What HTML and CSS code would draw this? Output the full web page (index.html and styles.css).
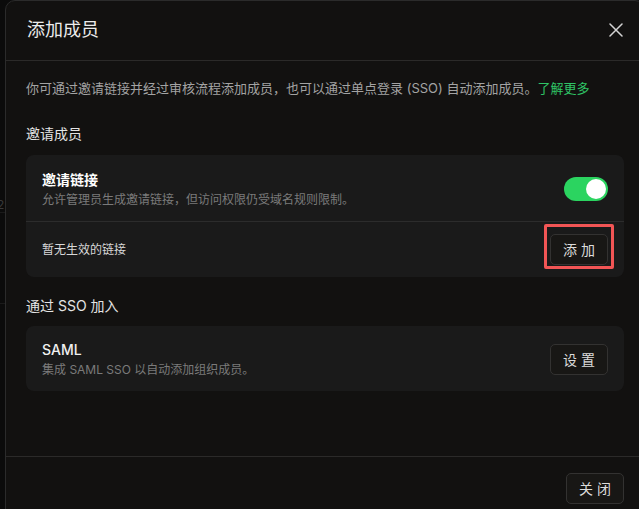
FILE: index.html
```html
<!DOCTYPE html>
<html lang="zh-CN">
<head>
<meta charset="utf-8">
<link rel="stylesheet" href="styles.css">
</head>
<body>
<div class="backdrop">
  <span class="bg-digit">2</span>
  <div class="bg-line bg-line-1"></div>
  <div class="bg-line bg-line-2"></div>
</div>
<div class="dialog">
  <header class="dialog-header">
    <h1 class="dialog-title">添加成员</h1>
    <button class="close-btn" aria-label="关闭">
      <svg width="14" height="14" viewBox="0 0 14 14"><path d="M1 1L13 13M13 1L1 13" stroke="#d4d4d4" stroke-width="1.5" stroke-linecap="round"/></svg>
    </button>
  </header>
  <div class="dialog-body">
    <p class="desc">你可通过邀请链接并经过审核流程添加成员，也可以通过单点登录 (SSO) 自动添加成员。<a class="link">了解更多</a></p>

    <h2 class="section-label">邀请成员</h2>
    <div class="card">
      <div class="row row-top">
        <div class="row-text">
          <div class="row-title bold">邀请链接</div>
          <div class="row-sub">允许管理员生成邀请链接，但访问权限仍受域名规则限制。</div>
        </div>
        <div class="toggle"><div class="knob"></div></div>
      </div>
      <div class="row row-bottom">
        <div class="row-plain">暂无生效的链接</div>
        <div class="highlight-wrap">
          <button class="btn">添 加</button>
          <div class="highlight"></div>
        </div>
      </div>
    </div>

    <h2 class="section-label section-label-2">通过 SSO 加入</h2>
    <div class="card">
      <div class="row row-saml">
        <div class="row-text">
          <div class="row-title">SAML</div>
          <div class="row-sub">集成 SAML SSO 以自动添加组织成员。</div>
        </div>
        <button class="btn">设 置</button>
      </div>
    </div>
  </div>
  <footer class="dialog-footer">
    <button class="btn">关 闭</button>
  </footer>
</div>
</body>
</html>
```

FILE: styles.css
```css
* { box-sizing: border-box; margin: 0; padding: 0; }
html, body {
  width: 639px;
  height: 509px;
  overflow: hidden;
  background: #0b0b0b;
  font-family: "Inter", "Noto Sans CJK SC", sans-serif;
  color: #e6e6e6;
}
body { position: relative; }

.backdrop { position: absolute; inset: 0; }
.bg-digit {
  position: absolute;
  left: -3px;
  top: 197px;
  font-size: 12px;
  color: #3a3a3a;
}
.bg-line { position: absolute; left: 0; width: 5px; height: 1px; background: #1a1a1a; }
.bg-line-1 { top: 212px; }
.bg-line-2 { top: 303px; }

.dialog {
  position: absolute;
  left: 5px;
  top: 0;
  width: 640px;
  height: 540px;
  background: #121110;
  border: 1px solid #2b2b2b;
  border-radius: 10px;
  display: flex;
  flex-direction: column;
}

.dialog-header {
  height: 60px;
  padding: 0 21px 0 21px;
  display: flex;
  align-items: center;
  justify-content: space-between;
  border-bottom: 1px solid #2b2a29;
}
.dialog-title {
  font-size: 18px;
  font-weight: 400;
  line-height: 22px;
  color: #ececec;
  margin-top: -2px;
}
.close-btn {
  background: none;
  border: none;
  width: 14px;
  height: 14px;
  display: flex;
  margin-top: -2px;
}

.dialog-body {
  height: 396px;
  padding: 17px 20px 0 20px;
  border-bottom: 1px solid #2b2a29;
}
.desc {
  font-size: 13px;
  line-height: 20px;
  color: #a3a3a3;
  white-space: nowrap;
}
.link { color: #2fc466; text-decoration: none; }

.section-label {
  font-size: 14px;
  font-weight: 400;
  line-height: 22px;
  color: #e4e4e4;
  margin-top: 25px;
  margin-bottom: 10px;
}
.section-label-2 { margin-top: 18px; margin-bottom: 9px; }

.card {
  width: 598px;
  background: #1a1a1a;
  border-radius: 8px;
}
.row {
  display: flex;
  align-items: center;
  justify-content: space-between;
  padding: 0 16px;
}
.row-top {
  padding-top: 14px;
  padding-bottom: 12px;
  border-bottom: 1px solid #2c2c2c;
}
.row-bottom { height: 55px; }
.row-saml { padding-top: 13px; padding-bottom: 12px; }

.row-title {
  font-size: 14px;
  line-height: 22px;
  color: #f0f0f0;
  font-weight: 500;
}
.row-title.bold { font-weight: 700; color: #ffffff; }
.row-sub {
  font-size: 12px;
  line-height: 18px;
  color: #7a7a7a;
}
.row-plain {
  font-size: 12px;
  line-height: 18px;
  color: #d8d8d8;
}

.toggle {
  width: 44px;
  height: 24px;
  border-radius: 12px;
  background: #2bd460;
  position: relative;
}
.knob {
  position: absolute;
  right: 2px;
  top: 2px;
  width: 20px;
  height: 20px;
  border-radius: 50%;
  background: #ffffff;
}

.btn {
  height: 31px;
  min-width: 57px;
  padding: 0 12px;
  background: #181715;
  border: 1px solid #333231;
  border-radius: 5px;
  color: #dcdcdc;
  font-family: "Inter", "Noto Sans CJK SC", sans-serif;
  font-size: 14px;
  line-height: 29px;
  white-space: pre;
}
.dialog-footer .btn { min-width: 58px; }
.highlight-wrap { position: relative; display: flex; margin-top: -1px; }
.highlight {
  position: absolute;
  left: -6px;
  right: -6px;
  top: -10px;
  bottom: -4px;
  border: 3px solid #f25555;
  border-radius: 2px;
  pointer-events: none;
}

.dialog-footer {
  padding: 16px 20px 0 20px;
  display: flex;
  justify-content: flex-end;
}
```
